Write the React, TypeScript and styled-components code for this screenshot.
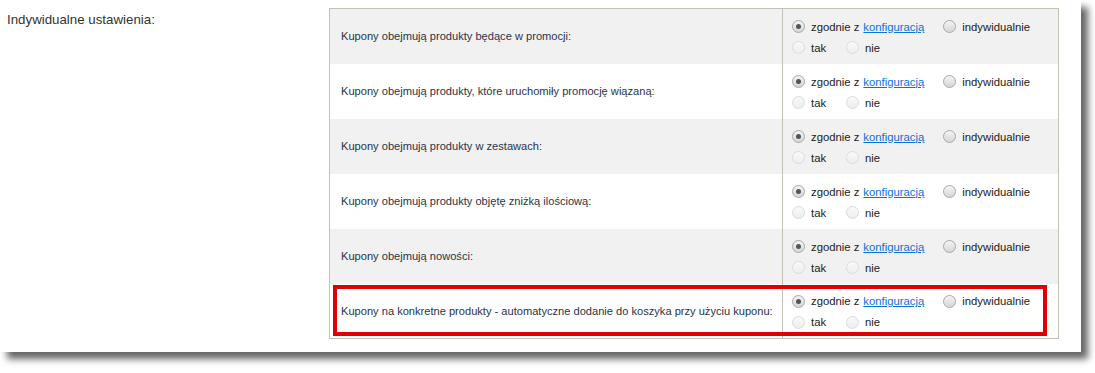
import React from 'react';
import styled, { createGlobalStyle } from 'styled-components';

const GlobalStyles = createGlobalStyle`
  html, body {
    margin: 0;
    padding: 0;
    background: #fff;
  }
`;

const Page = styled.div`
  width: 1095px;
  height: 373px;
  overflow: hidden;
  background: #fff;
`;

const Panel = styled.main`
  display: flex;
  align-items: flex-start;
  width: 1081px;
  height: 352px;
  background: #fff;
  box-shadow: 7px 7px 7px rgba(0, 0, 0, 0.6);
`;

const SectionLabel = styled.div`
  width: 322px;
  padding: 12px 0 0 7px;
  font-family: 'Liberation Sans', Arial, sans-serif;
  font-size: 13.3px;
  line-height: 16px;
  color: #333;
`;

const TableWrap = styled.div`
  position: relative;
  margin-top: 8px;
`;

const Table = styled.table`
  border-collapse: collapse;
  border: 1px solid #c4c1b4;
  width: 730px;
`;

const Row = styled.tr<{ $shaded: boolean }>`
  height: 55px;
  background: ${p => (p.$shaded ? '#f1f1f1' : '#fff')};
`;

const NameCell = styled.td`
  width: 441px;
  padding: 0 0 0 11px;
  vertical-align: middle;
  border-right: 1px solid #c4c1b4;
  font-family: 'Liberation Sans', Arial, sans-serif;
  font-size: 11.1px;
  color: #29344a;
`;

const ValueCell = styled.td`
  padding: 4px 0 2px 9px;
  vertical-align: middle;
  font-family: 'Liberation Sans', Arial, sans-serif;
  font-size: 11.3px;
  color: #222;
`;

const Line = styled.div`
  display: flex;
  align-items: center;
  height: 21px;
`;

const Option = styled.label<{ $wide?: boolean }>`
  display: flex;
  align-items: center;
  margin-right: ${p => (p.$wide ? '19px' : '20px')};
`;

const Radio = styled.span<{ $checked?: boolean; $disabled?: boolean }>`
  position: relative;
  box-sizing: border-box;
  width: 13px;
  height: 13px;
  margin-right: 6px;
  border-radius: 50%;
  border: 1px solid ${p => (p.$disabled ? '#dcdcdc' : '#a9a9a9')};
  background: ${p =>
    p.$disabled
      ? 'linear-gradient(#f9f9f9, #eeeeee)'
      : 'linear-gradient(#f4f4f4, #d6d6d6)'};

  &::after {
    content: '';
    display: ${p => (p.$checked ? 'block' : 'none')};
    position: absolute;
    left: 3px;
    top: 3px;
    width: 5px;
    height: 5px;
    border-radius: 50%;
    background: #555;
  }
`;

const Link = styled.a`
  margin-left: 4px;
  color: #0b72d8;
  text-decoration: underline;
`;

const Highlight = styled.div`
  position: absolute;
  left: 4px;
  right: 12px;
  bottom: 3px;
  height: 51px;
  box-sizing: border-box;
  border: 4px solid #e00000;
  pointer-events: none;
`;

const settings = [
  'Kupony obejmują produkty będące w promocji:',
  'Kupony obejmują produkty, które uruchomiły promocję wiązaną:',
  'Kupony obejmują produkty w zestawach:',
  'Kupony obejmują produkty objętę zniżką ilościową:',
  'Kupony obejmują nowości:',
  'Kupony na konkretne produkty - automatyczne dodanie do koszyka przy użyciu kuponu:',
];

const Choice = () => (
  <>
    <Line>
      <Option $wide>
        <Radio $checked />
        zgodnie z<Link href="#">konfiguracją</Link>
      </Option>
      <Option>
        <Radio />
        indywidualnie
      </Option>
    </Line>
    <Line>
      <Option>
        <Radio $disabled />
        tak
      </Option>
      <Option>
        <Radio $disabled />
        nie
      </Option>
    </Line>
  </>
);

const App = () => (
  <Page>
    <GlobalStyles />
    <Panel>
      <SectionLabel>Indywidualne ustawienia:</SectionLabel>
      <TableWrap>
        <Table>
          <tbody>
            {settings.map((name, i) => (
              <Row key={name} $shaded={i % 2 === 0}>
                <NameCell>{name}</NameCell>
                <ValueCell>
                  <Choice />
                </ValueCell>
              </Row>
            ))}
          </tbody>
        </Table>
        <Highlight />
      </TableWrap>
    </Panel>
  </Page>
);

export default App;
